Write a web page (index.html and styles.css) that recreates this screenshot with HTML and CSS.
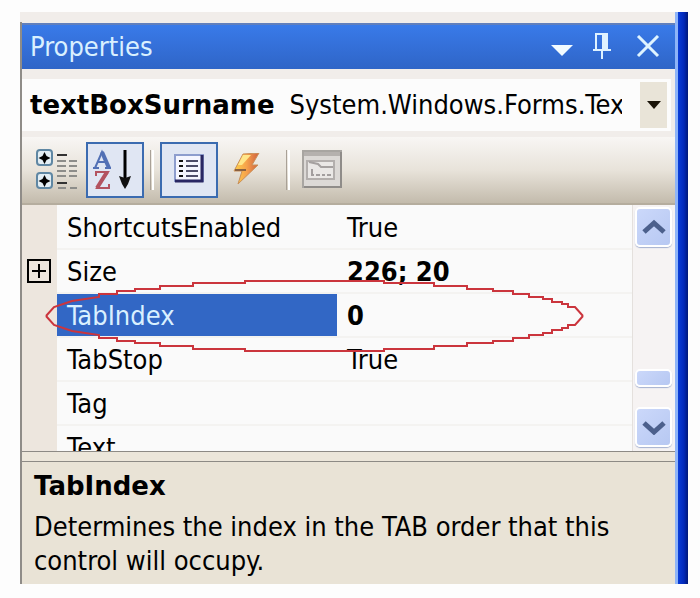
FILE: index.html
```html
<!DOCTYPE html>
<html lang="en">
<head>
  <meta charset="UTF-8">
  <title>Properties</title>
  <link rel="stylesheet" href="styles.css">
</head>
<body>

  <div class="window">
    <div class="panel">

      <div class="title-bar">
        <h1>Properties</h1>
        <button aria-label="Window position">
          <svg width="22" height="20" viewBox="0 0 22 20"><path d="M0 8h22L11 19z" fill="#f2fbff"/></svg>
        </button>
        <button aria-label="Auto hide">
          <svg width="20" height="28" viewBox="0 0 20 28"><path d="M4 1h11v16H4zM1 17h18M10 17v9" fill="none" stroke="#dff2ff" stroke-width="2"/><path d="M10 2h5v15h-5z" fill="#dff2ff"/></svg>
        </button>
        <button class="close" aria-label="Close">
          <svg width="24" height="24" viewBox="0 0 24 24"><path d="M2 1l20 20M22 1L2 21" stroke="#dff4ff" stroke-width="3"/></svg>
        </button>
      </div>

      <div class="object-box">
        <label for="object">textBoxSurname</label>
        <select id="object">
          <option>System.Windows.Forms.TextBox</option>
        </select>
        <span class="object-arrow"><svg width="14" height="8" viewBox="0 0 14 8"><path d="M0 0h14L7 8z" fill="#1a1408"/></svg></span>
      </div>

      <div class="toolbar">
        <button class="tool" aria-label="Categorized">
          <svg width="42" height="42" viewBox="0 0 42 42">
            <g fill="#e3eef4" stroke="#5f87a3" stroke-width="2"><rect x="1" y="1" width="15" height="15" rx="3"/><rect x="1" y="24" width="15" height="15" rx="3"/></g>
            <path d="M8.500 3l2 4 4 2-4 2-2 4-2-4-4-2 4-2zM8.500 26l2 4 4 2-4 2-2 4-2-4-4-2 4-2z" fill="#000"/>
            <path d="M21 6h10M21 34h10" stroke="#333" stroke-width="2"/>
            <path d="M21 12h9M33 12h8M21 17h9M33 17h8M21 22h9M33 22h8M21 27h9M33 27h8M22 39h8M34 39h7" stroke="#8d8d8a" stroke-width="2"/>
          </svg>
        </button>
        <button class="tool pressed" aria-label="Alphabetical">
          <svg width="44" height="42" viewBox="0 0 44 42">
            <path d="M2 19L9 3l7 16M5 13h9M0 19h6M12 19h6" fill="none" stroke="#5270b5" stroke-width="2"/>
            <path d="M9 3l7 16" stroke="#5270b5" stroke-width="4"/>
            <path d="M3 27v-4h12L4 39h12v-4" fill="none" stroke="#b35360" stroke-width="2"/>
            <path d="M14 23L4 39" stroke="#b35360" stroke-width="4"/>
            <path d="M32 1v32" stroke="#000" stroke-width="3"/>
            <path d="M26 27l6 2 6-2-3 8-3 5-3-5z" fill="#111"/>
          </svg>
        </button>
        <span class="separator"></span>
        <button class="tool pressed" aria-label="Properties">
          <svg width="30" height="32" viewBox="0 0 30 32">
            <path d="M1 1h28v26H1z" fill="#f5f6ff" stroke="#8d9dce" stroke-width="2"/>
            <path d="M1 27h27V1" fill="none" stroke="#292763" stroke-width="3"/>
            <path d="M5 7h4M5 12h4M5 17h4M5 22h4" stroke="#111" stroke-width="2"/>
            <path d="M12 7h12M12 12h12M12 17h12M12 22h12" stroke="#4c4c68" stroke-width="2"/>
          </svg>
        </button>
        <button class="tool" aria-label="Events">
          <svg width="28" height="34" viewBox="0 0 28 34">
            <defs><linearGradient id="bolt"><stop offset="0" stop-color="#ffd34c"/><stop offset=".5" stop-color="#f6a24b"/><stop offset="1" stop-color="#cf5f3f"/></linearGradient></defs>
            <path d="M10 1L26 0l-7 12 6 0L5 31l4-13H1z" fill="url(#bolt)" stroke="#c99058"/>
            <path d="M10 2h8L9 12H5z" fill="#ffe68a"/><path d="M2 17h11" stroke="#8a6040" stroke-width="2"/>
          </svg>
        </button>
        <span class="separator wide"></span>
        <button class="tool-page" aria-label="Property pages">
          <svg width="40" height="40" viewBox="0 0 40 40">
            <path d="M1 1h38v36H1z" fill="#dcd9d6" stroke="#a8a5a1" stroke-width="2"/>
            <path d="M2 4h36" stroke="#b5b1ae" stroke-width="4"/>
            <path d="M5 11h27v18H5z" fill="#eae8e6" stroke="#b3afad" stroke-width="2"/>
            <path d="M7 12l9 2 3 3h12" fill="none" stroke="#a5a1a0" stroke-width="2"/>
            <path d="M10 19v6M9 25h3M14 25h4M20 25h3M25 25h4" stroke="#a29e9e" stroke-width="2"/>
            <path d="M39 2v35H2" fill="none" stroke="#8f8c89" stroke-width="2"/>
          </svg>
        </button>
      </div>

      <div class="grid">
        <table class="properties">
          <tr><td class="gutter"></td><th scope="row">ShortcutsEnabled</th><td>True</td></tr>
          <tr>
            <td class="gutter">
              <button class="expand" aria-label="Expand Size"><svg width="24" height="24" viewBox="0 0 24 24"><path d="M1 1h22v22H1zM5 12h14M12 5v14" fill="none" stroke="#000" stroke-width="2"/></svg></button>
            </td>
            <th scope="row">Size</th><td class="changed">226; 20</td>
          </tr>
          <tr class="selected"><td class="gutter"></td><th scope="row">TabIndex</th><td class="changed">0</td></tr>
          <tr><td class="gutter"></td><th scope="row">TabStop</th><td>True</td></tr>
          <tr><td class="gutter"></td><th scope="row">Tag</th><td></td></tr>
          <tr><td class="gutter"></td><th scope="row">Text</th><td></td></tr>
        </table>

        <div class="scrollbar">
          <button class="scroll-button" aria-label="Scroll up">
            <svg width="24" height="16" viewBox="0 0 24 16"><path d="M2 13L12 4l10 9" fill="none" stroke="#4c608c" stroke-width="5"/></svg>
          </button>
          <div class="thumb"></div>
          <button class="scroll-button" aria-label="Scroll down">
            <svg width="24" height="16" viewBox="0 0 24 16"><path d="M2 4l10 9 10-9" fill="none" stroke="#4c608c" stroke-width="5"/></svg>
          </button>
        </div>

        <!-- red ring around the TabIndex row -->
        <svg class="ring" width="542" height="74" viewBox="0 0 542 74" fill="none" stroke="#cb353d" stroke-width="2">
          <path d="M2 37L10 28 28 22 55 18V15H73V12H91V10H116V7H149V4H201V2H340V4H390V7H423V10H449V12H469V15H485V18H499V20H508V23H518V25H524V28H531L539 37"/>
          <path d="M2 37L10 46 28 52 55 56V59H73V62H91V64H116V67H149V70H201V72H340V70H390V67H423V64H449V62H469V59H485V56H499V54H508V51H518V49H524V46H531L539 37"/>
        </svg>
      </div>

      <div class="splitter"></div>

      <div class="description">
        <h2>TabIndex</h2>
        <p>Determines the index in the TAB order that this control will occupy.</p>
      </div>
    </div>
    <div class="window-edge"></div>
  </div>

</body>
</html>
```
FILE: styles.css
```css
* {
  box-sizing: border-box;
}

body {
  margin: 0;
  padding: 12px 12px 14px 20px;
  background: #fdfdfd;
  color: #000;
  font-family: "DejaVu Sans Condensed", "Noto Sans", sans-serif;
  font-size: 27px;
  line-height: 34px;
}

h1, h2, p {
  margin: 0;
}

button {
  display: flex;
  align-items: center;
  justify-content: center;
  padding: 0;
  border: none;
  background: none;
}

.window {
  display: flex;
  min-height: calc(100vh - 26px);
}

.panel {
  display: flex;
  flex: 1;
  flex-direction: column;
  min-width: 0;
  padding-top: 11px;
  border-left: 2px solid #8f8c88;
  border-image: linear-gradient(#f1edea 11px, #8f8c88 11px) 1;
  border-image-width: 0 0 0 2px;
  background: #f1edea;
}

.window-edge {
  width: 13px;
  background: linear-gradient(90deg, #8eb4f8 0 3px, #0a3dd8 3px, #0228b8 9px, #001878);
}

.title-bar {
  display: flex;
  align-items: center;
  height: 46px;
  padding: 0 1px 0 8px;
  border-top: 2px solid #607fbd;
  background: linear-gradient(#397ae9, #2f65c7);
}

.title-bar h1 {
  flex: 1;
  color: #d9f0ff;
  font-size: 27px;
  font-weight: normal;
}

.title-bar button {
  width: 40px;
  height: 40px;
}

.title-bar .close {
  width: 52px;
}

.object-box {
  display: flex;
  align-items: center;
  height: 52px;
  margin: 10px 4px 6px 0;
  padding: 3px 4px 3px 8px;
  background: #fcfcfc;
}

.object-box label,
.description h2 {
  font-family: "DejaVu Sans", "Noto Sans", sans-serif;
  font-size: 26px;
  font-weight: bold;
}

.object-box select {
  flex: 1;
  min-width: 0;
  height: 46px;
  margin-left: 15px;
  padding: 0;
  border: none;
  background: none;
  color: #000;
  font: inherit;
  appearance: none;
}

.object-arrow {
  display: flex;
  align-items: center;
  justify-content: center;
  width: 27px;
  height: 46px;
  margin-left: 18px;
  background: #e9e4d8;
}

.toolbar {
  display: flex;
  align-items: center;
  height: 68px;
  padding-left: 6px;
  border-bottom: 2px solid #b5ad9e;
  background: linear-gradient(#f8f6f4, #e8e3da 50%, #c3bbac);
}

.tool {
  width: 58px;
  height: 56px;
}

.tool-page {
  margin-left: 6px;
}

.pressed {
  border: 2px solid #3b6bb0;
  background: #e0e6f3;
}

.separator {
  width: 4px;
  height: 40px;
  margin: 0 6px;
  border-left: 1px solid #a9a197;
  border-right: 2px solid #fff;
}

.separator.wide {
  margin: 0 6px 0 10px;
}

.grid {
  position: relative;
  display: flex;
  flex: 1 0 0;
  overflow: hidden;
  background: #fafafa;
}

.properties {
  flex: 1;
  align-self: flex-start;
  border-collapse: collapse;
  table-layout: fixed;
}

.properties td,
.properties th {
  height: 44px;
  padding: 2px 0 0 10px;
  border-bottom: 2px solid #f4f3f1;
  font-weight: normal;
  text-align: left;
}

.properties th {
  width: 280px;
}

.properties .gutter {
  width: 35px;
  padding: 0 0 0 5px;
  border-bottom: none;
  background: #ede6de;
}

.properties .changed {
  font-weight: bold;
}

.properties .selected th {
  background: #3267c5;
  color: #d9f0ff;
}

.scrollbar {
  display: flex;
  flex-direction: column;
  width: 43px;
  padding: 2px 3px 4px 2px;
  border-left: 1px solid #e4e0dd;
  background: #f6f3f3;
}

.scroll-button,
.thumb {
  width: 37px;
  height: 40px;
  border: 2px solid #fff;
  border-radius: 5px;
  background: linear-gradient(135deg, #cbd8fa, #b7c8f2);
  box-shadow: 0 1px 1px #a5b1d0;
}

.thumb {
  height: 18px;
  margin: auto 0 20px;
}

.ring {
  position: absolute;
  top: 74px;
  left: 22px;
}

.splitter {
  height: 11px;
  border-top: 1px solid #8d8a85;
  border-bottom: 1px solid #8d8a85;
  background: #ece6da;
}

.description {
  height: 122px;
  padding: 7px 12px;
  background: #e9e3d6;
}

.description h2 {
  margin-bottom: 7px;
}
```
